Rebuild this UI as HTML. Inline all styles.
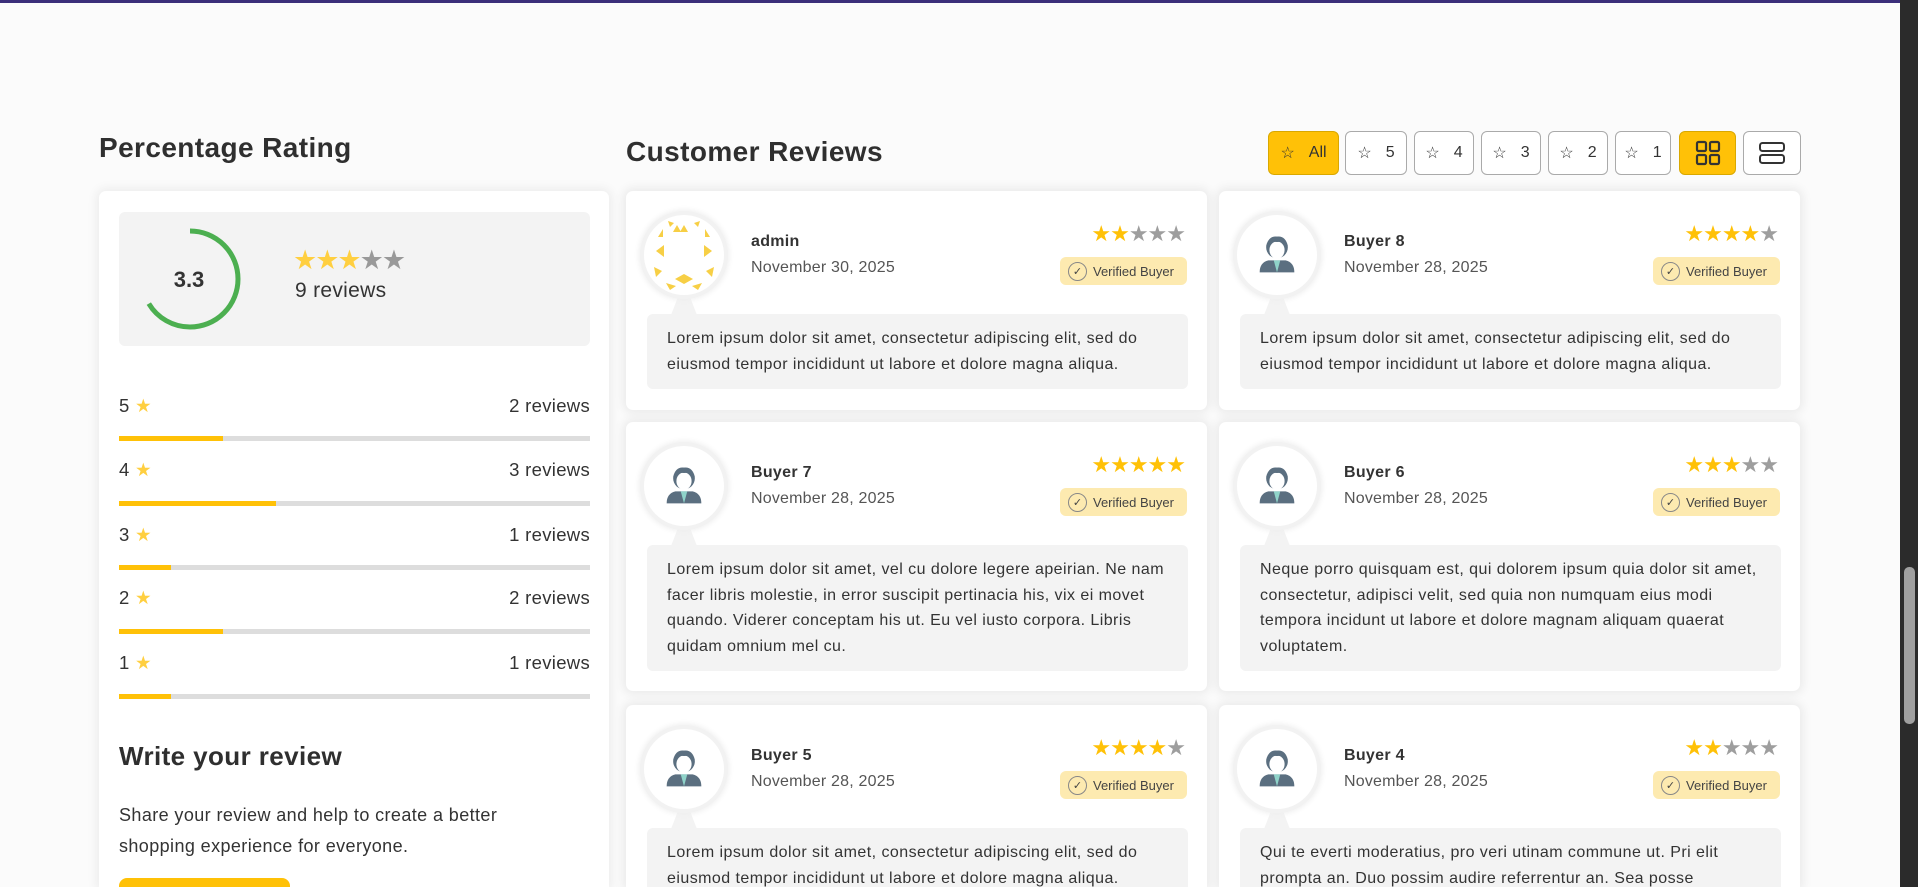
<!DOCTYPE html>
<html><head><meta charset="utf-8"><style>
*{box-sizing:border-box;margin:0;padding:0}
html,body{width:1918px;height:887px;overflow:hidden}
body{background:#fbfbfb;font-family:"Liberation Sans",sans-serif;color:#333;position:relative}
#w{position:absolute;left:0;top:0;width:1918px;height:887px;overflow:hidden}
.topbar{position:absolute;left:0;top:0;width:1900px;height:3px;background:#3b2f7a}
.sb{position:absolute;left:1900px;top:0;width:18px;height:887px;background:#2b2b2b}
.thumb{position:absolute;left:1904px;top:567px;width:11px;height:157px;background:#a0a0a0;border-radius:5px}
.h2{position:absolute;font-weight:bold;font-size:28px;color:#2f2f2f;letter-spacing:0.4px}
.card{position:absolute;background:#fff;border-radius:7px 7px 0 0;box-shadow:0 0 10px 3px rgba(0,0,0,0.06)}
.sum{position:absolute;left:119px;top:212px;width:471px;height:134px;background:#f3f3f3;border-radius:6px}
.row{position:absolute;left:119px;width:471px;font-size:18.5px;color:#333;letter-spacing:0.3px}
.row .r{position:absolute;right:0;top:0}
.bar{position:absolute;left:119px;width:471px;height:5px;background:#ddd}
.bar i{display:block;height:5px;background:#ffc107}
.ystar{color:#ffcf40}
.btn{position:absolute;top:131px;height:44px;border:1px solid #aaa;border-radius:6px;background:#fff;font-size:16px;color:#333;display:flex;align-items:center;justify-content:center;gap:14px}
.btn.on{background:#ffc107;border-color:#d9a800}
.rc{position:absolute;background:#fff;border-radius:7px;box-shadow:0 0 10px 3px rgba(0,0,0,0.07);width:581px;overflow:hidden}
.rc.b{border-radius:7px 7px 0 0}
.av{position:absolute;left:18px;top:24px;width:80px;height:80px;border-radius:50%;background:#fff;box-shadow:0 0 0 4px #f2f2f2,0 0 6px 5px #eee}
.stem{position:absolute;left:45px;top:104px;width:26px;height:20px;background:#f3f3f3;clip-path:polygon(30% 0,70% 0,100% 100%,0 100%)}
.nm{position:absolute;left:125px;top:42px;font-weight:bold;font-size:16px;color:#333;letter-spacing:0.3px}
.dt{position:absolute;left:125px;top:68px;font-size:16px;color:#555;letter-spacing:0.2px}
.st{position:absolute;right:22px;top:32px;font-size:22px;letter-spacing:-1px;color:#ffc107;line-height:1}
.st .g{color:#9e9e9e}
.vb{position:absolute;right:20px;top:66px;width:127px;height:28px;background:#fdeab0;border-radius:6px;font-size:13px;color:#444;display:flex;align-items:center;padding-left:8px;gap:6px}
.vb span.c{width:19px;height:19px;border:1px solid #888;border-radius:50%;display:flex;align-items:center;justify-content:center;font-size:11px}
.tx{position:absolute;left:21px;right:19px;top:123px;background:#f3f3f3;border-radius:6px;padding:12px 20px;font-size:16px;line-height:25.5px;color:#333;letter-spacing:0.45px}
</style></head><body><div id="w">
<div class="topbar"></div>

<div class="h2" style="left:99px;top:132px">Percentage Rating</div>
<div class="card" style="left:99px;top:191px;width:510px;height:696px"></div>
<div class="sum"></div>
<svg style="position:absolute;left:130px;top:219px" width="120" height="120" viewBox="0 0 120 120">
<circle cx="60" cy="60" r="48" fill="none" stroke="#4caf50" stroke-width="5" stroke-dasharray="200 400" transform="rotate(-90 60 60)"/>
<text x="59" y="68" text-anchor="middle" font-family="Liberation Sans" font-weight="bold" font-size="22" fill="#333">3.3</text>
</svg>
<div style="position:absolute;left:293px;top:247px;font-size:27px;letter-spacing:-2px;line-height:1"><span class="ystar">★★★</span><span style="color:#999">★★</span></div>
<div style="position:absolute;left:295px;top:279px;font-size:21px;color:#333;letter-spacing:0.3px">9 reviews</div>

<div class="row" style="top:395px">5 <span class="ystar">★</span><span class="r">2 reviews</span></div>
<div class="bar" style="top:436px"><i style="width:104px"></i></div>
<div class="row" style="top:459px">4 <span class="ystar">★</span><span class="r">3 reviews</span></div>
<div class="bar" style="top:501px"><i style="width:157px"></i></div>
<div class="row" style="top:524px">3 <span class="ystar">★</span><span class="r">1 reviews</span></div>
<div class="bar" style="top:565px"><i style="width:52px"></i></div>
<div class="row" style="top:587px">2 <span class="ystar">★</span><span class="r">2 reviews</span></div>
<div class="bar" style="top:629px"><i style="width:104px"></i></div>
<div class="row" style="top:652px">1 <span class="ystar">★</span><span class="r">1 reviews</span></div>
<div class="bar" style="top:694px"><i style="width:52px"></i></div>

<div style="position:absolute;left:119px;top:741px;font-weight:bold;font-size:26px;color:#2f2f2f;letter-spacing:0.4px">Write your review</div>
<div style="position:absolute;left:119px;top:800px;font-size:18px;line-height:31px;color:#333;width:440px;letter-spacing:0.4px">Share your review and help to create a better shopping experience for everyone.</div>
<div style="position:absolute;left:119px;top:878px;width:171px;height:9px;background:#ffc107;border-radius:8px 8px 0 0"></div>

<div class="h2" style="left:626px;top:136px">Customer Reviews</div>
<div class="btn on" style="left:1268px;width:71px">☆ <span>All</span></div>
<div class="btn" style="left:1345px;width:62px">☆ <span>5</span></div>
<div class="btn" style="left:1414px;width:60px">☆ <span>4</span></div>
<div class="btn" style="left:1481px;width:60px">☆ <span>3</span></div>
<div class="btn" style="left:1548px;width:60px">☆ <span>2</span></div>
<div class="btn" style="left:1615px;width:56px">☆ <span>1</span></div>
<div class="btn on" style="left:1679px;width:57px"><svg width="26" height="26" viewBox="0 0 26 26" fill="none" stroke="#333" stroke-width="2.2"><rect x="2" y="2" width="9" height="9" rx="1.5"/><rect x="15" y="2" width="9" height="9" rx="1.5"/><rect x="2" y="15" width="9" height="9" rx="1.5"/><rect x="15" y="15" width="9" height="9" rx="1.5"/></svg></div>
<div class="btn" style="left:1743px;width:58px"><svg width="28" height="24" viewBox="0 0 28 24" fill="none" stroke="#333" stroke-width="2"><rect x="2" y="2" width="24" height="8" rx="2.5"/><rect x="2" y="14" width="24" height="8" rx="2.5"/></svg></div>

<svg width="0" height="0" style="position:absolute"><defs>
<g id="p"><path d="M8 40 Q8 31 16 29 L32 29 Q40 31 40 40 Z" fill="#5b6f80"/><path d="M21 29 L24 40 L27 29 Z" fill="#8fd3c9"/><circle cx="24" cy="17" r="10" fill="#5b6f80"/><ellipse cx="24" cy="19.5" rx="7" ry="8" fill="#fff"/><path d="M14 16 Q16 6 24 7 Q32 6 34 16 Q30 11 24 12 Q18 11 14 16Z" fill="#5b6f80"/></g>
<g id="a" fill="#f7cf45"><path d="M33 10l4 7h-8z"/><path d="M40 10l4 7h-8z"/><path d="M14 22l5 -8v8z"/><path d="M66 22l-5 -8v8z"/><path d="M12 36l8-6v12z"/><path d="M68 36l-8-6v12z"/><path d="M31 64l9-5 9 5-9 5z"/><path d="M10 52l8 4-6 6z"/><path d="M70 52l-8 4 6 6z"/><path d="M22 68l10 3-6 4z"/><path d="M58 68l-10 3 6 4z"/><path d="M24 6l6 2-4 4z"/><path d="M56 6l-6 2 4 4z"/></g>
</defs></svg>

<div class="rc" style="left:626px;top:191px;height:219px">
<div class="stem"></div><div class="av"><svg width="80" height="80" viewBox="0 0 80 80"><use href="#a"/></svg></div>
<div class="nm">admin</div><div class="dt">November 30, 2025</div>
<div class="st">★★<span class="g">★★★</span></div>
<div class="vb"><span class="c">✓</span>Verified Buyer</div>
<div class="tx">Lorem ipsum dolor sit amet, consectetur adipiscing elit, sed do eiusmod tempor incididunt ut labore et dolore magna aliqua.</div>
</div>
<div class="rc" style="left:1219px;top:191px;height:219px">
<div class="stem"></div><div class="av"><svg width="80" height="80" viewBox="0 0 48 48" style="padding:14px"><use href="#p"/></svg></div>
<div class="nm">Buyer 8</div><div class="dt">November 28, 2025</div>
<div class="st">★★★★<span class="g">★</span></div>
<div class="vb"><span class="c">✓</span>Verified Buyer</div>
<div class="tx">Lorem ipsum dolor sit amet, consectetur adipiscing elit, sed do eiusmod tempor incididunt ut labore et dolore magna aliqua.</div>
</div>
<div class="rc" style="left:626px;top:422px;height:269px">
<div class="stem"></div><div class="av"><svg width="80" height="80" viewBox="0 0 48 48" style="padding:14px"><use href="#p"/></svg></div>
<div class="nm">Buyer 7</div><div class="dt">November 28, 2025</div>
<div class="st">★★★★★</div>
<div class="vb"><span class="c">✓</span>Verified Buyer</div>
<div class="tx">Lorem ipsum dolor sit amet, vel cu dolore legere apeirian. Ne nam facer libris molestie, in error suscipit pertinacia his, vix ei movet quando. Viderer conceptam his ut. Eu vel iusto corpora. Libris quidam omnium mel cu.</div>
</div>
<div class="rc" style="left:1219px;top:422px;height:269px">
<div class="stem"></div><div class="av"><svg width="80" height="80" viewBox="0 0 48 48" style="padding:14px"><use href="#p"/></svg></div>
<div class="nm">Buyer 6</div><div class="dt">November 28, 2025</div>
<div class="st">★★★<span class="g">★★</span></div>
<div class="vb"><span class="c">✓</span>Verified Buyer</div>
<div class="tx">Neque porro quisquam est, qui dolorem ipsum quia dolor sit amet, consectetur, adipisci velit, sed quia non numquam eius modi tempora incidunt ut labore et dolore magnam aliquam quaerat voluptatem.</div>
</div>
<div class="rc b" style="left:626px;top:705px;height:182px">
<div class="stem"></div><div class="av"><svg width="80" height="80" viewBox="0 0 48 48" style="padding:14px"><use href="#p"/></svg></div>
<div class="nm">Buyer 5</div><div class="dt">November 28, 2025</div>
<div class="st">★★★★<span class="g">★</span></div>
<div class="vb"><span class="c">✓</span>Verified Buyer</div>
<div class="tx">Lorem ipsum dolor sit amet, consectetur adipiscing elit, sed do eiusmod tempor incididunt ut labore et dolore magna aliqua.</div>
</div>
<div class="rc b" style="left:1219px;top:705px;height:182px">
<div class="stem"></div><div class="av"><svg width="80" height="80" viewBox="0 0 48 48" style="padding:14px"><use href="#p"/></svg></div>
<div class="nm">Buyer 4</div><div class="dt">November 28, 2025</div>
<div class="st">★★<span class="g">★★★</span></div>
<div class="vb"><span class="c">✓</span>Verified Buyer</div>
<div class="tx">Qui te everti moderatius, pro veri utinam commune ut. Pri elit prompta an. Duo possim audire referrentur an. Sea posse</div>
</div>

<div class="sb"></div><div class="thumb"></div>
</div></body></html>
